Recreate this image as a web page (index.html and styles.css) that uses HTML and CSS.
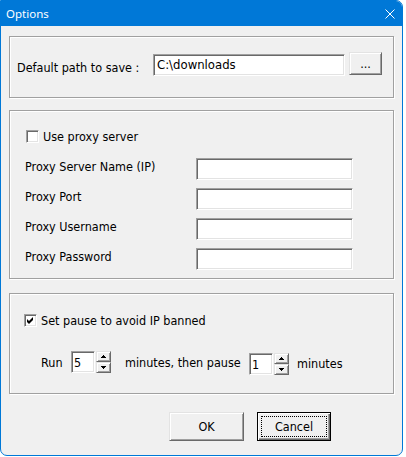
FILE: index.html
```html
<!DOCTYPE html>
<html lang="en">
<head>
<meta charset="utf-8">
<title>Options</title>
<link rel="stylesheet" href="styles.css">
</head>
<body>
<div class="window">
  <div class="titlebar">
    <span class="title">Options</span>
    <svg class="close" width="10" height="10" viewBox="0 0 10 10" aria-label="Close">
      <path d="M0.5 0.5 L9.5 9.5 M9.5 0.5 L0.5 9.5" stroke="#fff" stroke-width="1" fill="none"/>
    </svg>
  </div>

  <div class="client">
    <div class="group group-path">
      <span class="path-label">Default path to save :</span>
      <div class="edit path-edit">C:\downloads</div>
      <div class="button browse">...</div>
    </div>

    <div class="group group-proxy">
      <div class="check-row proxy-check">
        <span class="checkbox"></span>
        <span>Use proxy server</span>
      </div>
      <div class="fields">
        <span class="field-label">Proxy Server Name (IP)</span>
        <div class="edit field-edit"></div>
        <span class="field-label">Proxy Port</span>
        <div class="edit field-edit"></div>
        <span class="field-label">Proxy Username</span>
        <div class="edit field-edit"></div>
        <span class="field-label">Proxy Password</span>
        <div class="edit field-edit"></div>
      </div>
    </div>

    <div class="group group-pause">
      <div class="check-row pause-check">
        <span class="checkbox">
          <svg width="11" height="11" viewBox="0 0 11 11">
            <polygon points="2,4 4,6 8,2 8,5 4,9 2,7" fill="#000"/>
          </svg>
        </span>
        <span>Set pause to avoid IP banned</span>
      </div>
      <div class="spin-row">
        <span class="spin-text run-text">Run</span>
        <div class="spin">
          <div class="edit spin-edit">5</div>
          <div class="spin-buttons">
            <div class="spin-btn">
              <svg width="5" height="3" viewBox="0 0 5 3"><path d="M2 0h1v1h-1z M1 1h3v1h-3z M0 2h5v1h-5z" fill="#000"/></svg>
            </div>
            <div class="spin-btn">
              <svg width="5" height="3" viewBox="0 0 5 3"><path d="M0 0h5v1h-5z M1 1h3v1h-3z M2 2h1v1h-1z" fill="#000"/></svg>
            </div>
          </div>
        </div>
        <span class="spin-text between-text">minutes, then pause</span>
        <div class="spin spin-second">
          <div class="edit spin-edit">1</div>
          <div class="spin-buttons">
            <div class="spin-btn">
              <svg width="5" height="3" viewBox="0 0 5 3"><path d="M2 0h1v1h-1z M1 1h3v1h-3z M0 2h5v1h-5z" fill="#000"/></svg>
            </div>
            <div class="spin-btn">
              <svg width="5" height="3" viewBox="0 0 5 3"><path d="M0 0h5v1h-5z M1 1h3v1h-3z M2 2h1v1h-1z" fill="#000"/></svg>
            </div>
          </div>
        </div>
        <span class="spin-text tail-text">minutes</span>
      </div>
    </div>

    <div class="actions">
      <div class="button push ok">OK</div>
      <div class="button push cancel">Cancel</div>
    </div>
  </div>
</div>
</body>
</html>
```
FILE: styles.css
```css
* {
  box-sizing: border-box;
}

body {
  margin: 0;
  background: #fff;
  color: #000;
  font-family: "DejaVu Sans Condensed", "DejaVu Sans", sans-serif;
  font-stretch: condensed;
  font-size: 12.5px;
  line-height: 15px;
}

/* dialog frame */
.window {
  width: 403px;
  height: 456px;
  border: 1px solid #0078d7;
  border-radius: 0 7px 7px 7px;
  background: #f0f0f0;
  overflow: hidden;
}

.titlebar {
  height: 25px;
  background: #0078d7;
  color: #fff;
  display: flex;
  align-items: center;
  justify-content: space-between;
  padding: 0 7px 0 5px;
  font-family: "Noto Sans", "Open Sans", sans-serif;
  font-stretch: normal;
  font-size: 11.5px;
}

.close {
  display: block;
}

.client {
  padding: 10px 8px 0;
}

/* etched group frames */
.group {
  border: 1px solid #a0a0a0;
  box-shadow: inset 1px 1px 0 #fff, 1px 1px 0 #fff;
}

/* sunken text field */
.edit {
  background: #fff;
  border: 1px solid;
  border-color: #a0a0a0 #fff #fff #a0a0a0;
  box-shadow: inset 1px 1px 0 #696969, inset -1px -1px 0 #e3e3e3;
  height: 22px;
  white-space: nowrap;
}

/* raised push button */
.button {
  background: #f0f0f0;
  border: 1px solid;
  border-color: #e3e3e3 #696969 #696969 #e3e3e3;
  box-shadow: inset 1px 1px 0 #fff, inset -1px -1px 0 #a0a0a0;
  display: flex;
  align-items: center;
  justify-content: center;
}

/* path group */
.group-path {
  height: 62px;
  display: flex;
  align-items: flex-start;
  padding-left: 7px;
}

.path-label {
  width: 136px;
  margin-top: 23px;
}

.path-edit {
  width: 192px;
  margin-top: 17px;
  padding: 2px 3px 0;
  font-size: 13px;
  line-height: 16px;
}

.browse {
  width: 33px;
  height: 23px;
  margin-top: 15px;
  margin-left: 4px;
}

/* check boxes */
.check-row {
  display: flex;
  align-items: center;
  gap: 4px;
}

.checkbox {
  width: 13px;
  height: 13px;
  flex: none;
  background: #fff;
  border: 1px solid;
  border-color: #a0a0a0 #fff #fff #a0a0a0;
  box-shadow: inset 1px 1px 0 #696969, inset -1px -1px 0 #e3e3e3;
  display: flex;
  align-items: center;
  justify-content: center;
}

.checkbox svg {
  display: block;
}

/* proxy group */
.group-proxy {
  height: 169px;
  margin-top: 12px;
}

.proxy-check {
  margin-top: 18px;
  padding-left: 16px;
}

.fields {
  display: grid;
  grid-template-columns: 171px 157px;
  grid-auto-rows: 30px;
  margin-top: 8px;
  padding-left: 15px;
}

.field-label {
  margin-top: 7px;
}

.field-edit {
  margin-top: 6px;
}

/* pause group */
.group-pause {
  height: 101px;
  margin-top: 14px;
}

.pause-check {
  margin-top: 19px;
  padding-left: 14px;
}

.spin-row {
  display: flex;
  align-items: flex-start;
  margin-top: 23px;
  padding-left: 31px;
}

.spin-text {
  margin-top: 4px;
  white-space: nowrap;
}

.run-text {
  width: 30px;
}

.between-text {
  width: 138px;
  padding-left: 14px;
}

.tail-text {
  margin-left: 8px;
  margin-top: 5px;
}

.spin {
  display: flex;
}

.spin-second {
  margin-top: 2px;
}

.spin-edit {
  width: 24px;
  padding: 3px 0 0 2px;
}

.spin-buttons {
  width: 15px;
  height: 22px;
  margin-left: 1px;
  display: flex;
  flex-direction: column;
}

.spin-btn {
  height: 11px;
  background: #f0f0f0;
  border: 1px solid;
  border-color: #e3e3e3 #696969 #696969 #e3e3e3;
  box-shadow: inset 1px 1px 0 #fff, inset -1px -1px 0 #a0a0a0;
  display: flex;
  align-items: center;
  justify-content: center;
}

.spin-btn svg {
  display: block;
  shape-rendering: crispEdges;
}

/* dialog buttons */
.actions {
  display: flex;
  gap: 13px;
  margin-top: 18px;
  padding-left: 160px;
}

.push {
  height: 29px;
}

.ok {
  width: 75px;
}

.cancel {
  width: 74px;
  border-color: #000;
  box-shadow: inset 1px 1px 0 #fff, inset -1px -1px 0 #696969, inset -2px -2px 0 #a0a0a0;
  outline: 1px dotted #000;
  outline-offset: -5px;
}
```
